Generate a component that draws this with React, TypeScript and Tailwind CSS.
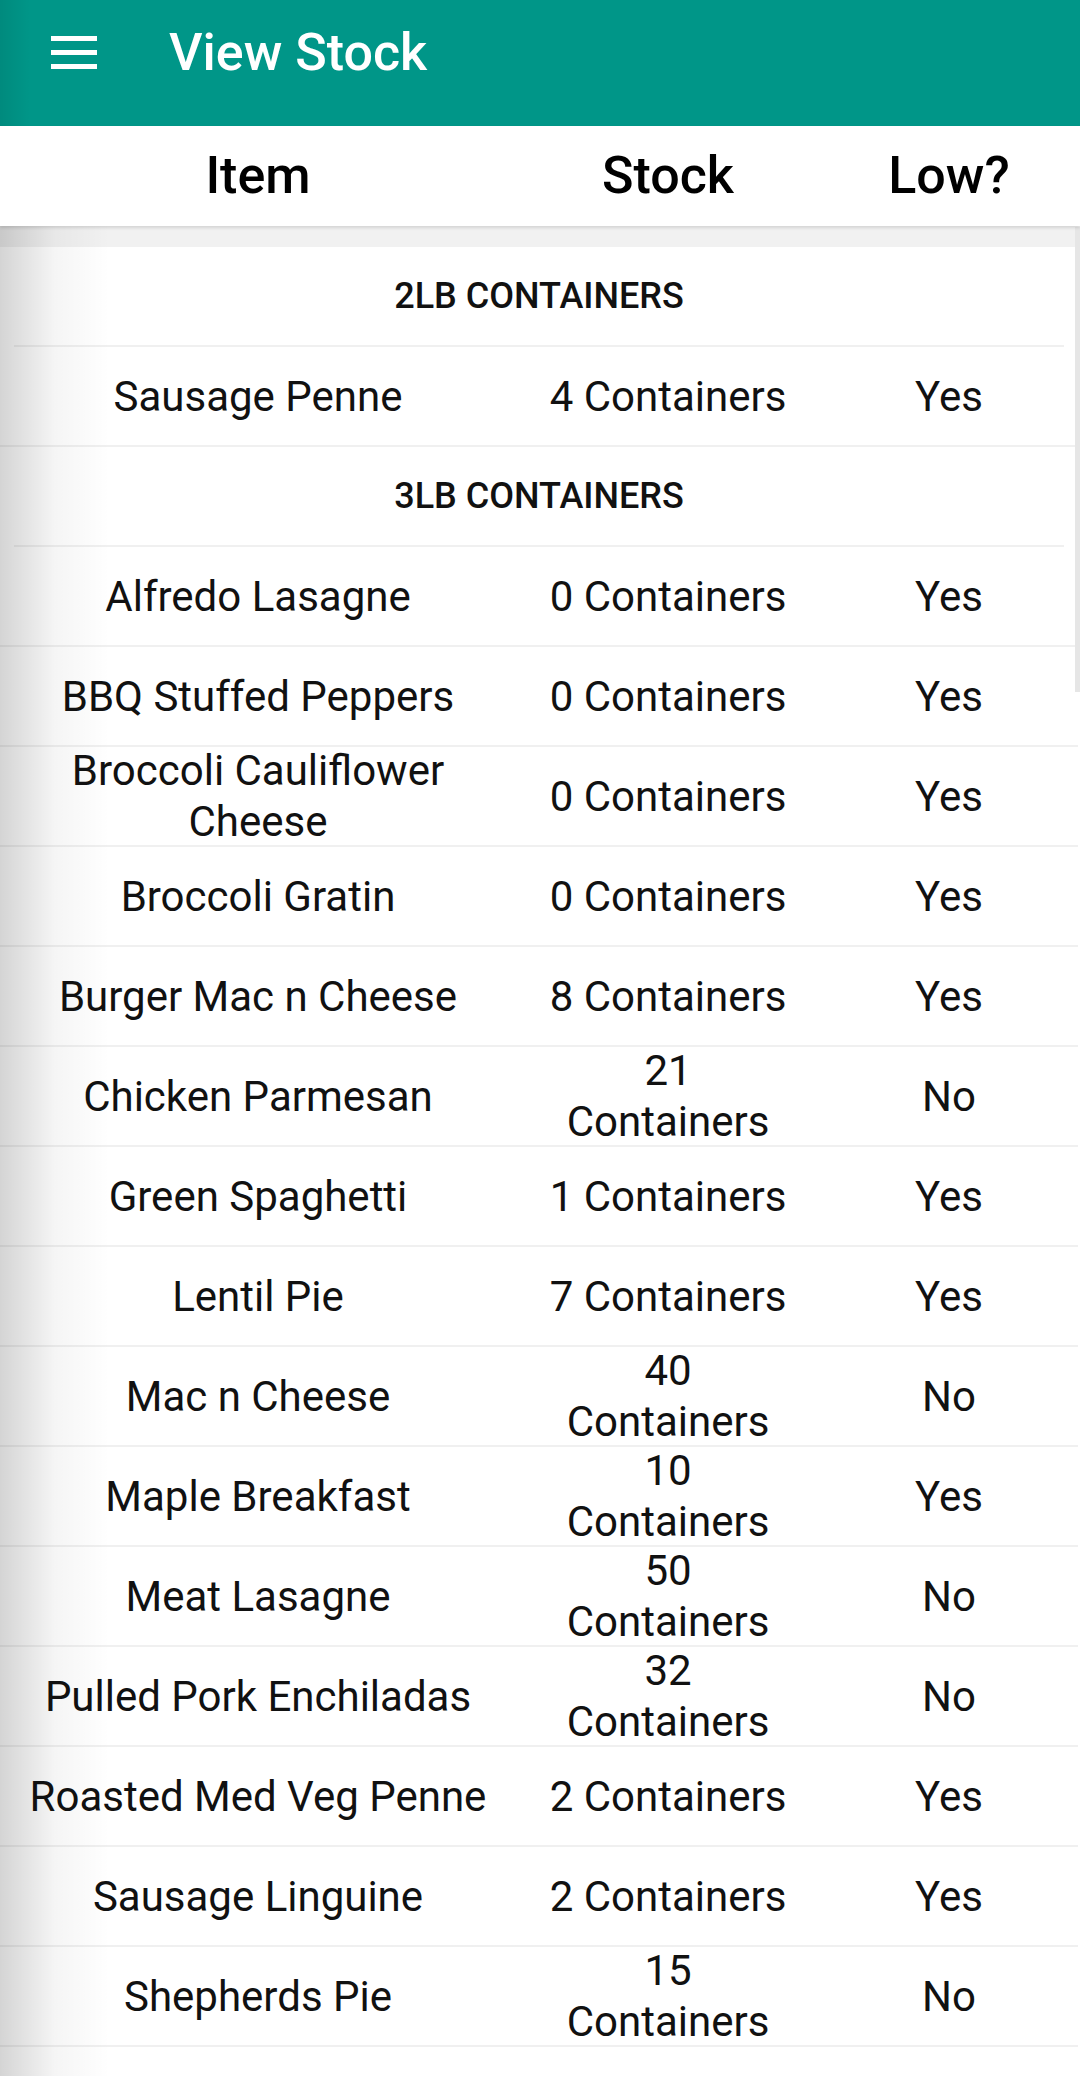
import React from "react"

type Row =
    | { kind: "section"; label: string }
    | { kind: "item"; name: string; stock: string; low: string }

const rows: Row[] = [
    { kind: "section", label: "2LB CONTAINERS" },
    { kind: "item", name: "Sausage Penne", stock: "4 Containers", low: "Yes" },
    { kind: "section", label: "3LB CONTAINERS" },
    { kind: "item", name: "Alfredo Lasagne", stock: "0 Containers", low: "Yes" },
    { kind: "item", name: "BBQ Stuffed Peppers", stock: "0 Containers", low: "Yes" },
    { kind: "item", name: "Broccoli Cauliflower Cheese", stock: "0 Containers", low: "Yes" },
    { kind: "item", name: "Broccoli Gratin", stock: "0 Containers", low: "Yes" },
    { kind: "item", name: "Burger Mac n Cheese", stock: "8 Containers", low: "Yes" },
    { kind: "item", name: "Chicken Parmesan", stock: "21 Containers", low: "No" },
    { kind: "item", name: "Green Spaghetti", stock: "1 Containers", low: "Yes" },
    { kind: "item", name: "Lentil Pie", stock: "7 Containers", low: "Yes" },
    { kind: "item", name: "Mac n Cheese", stock: "40 Containers", low: "No" },
    { kind: "item", name: "Maple Breakfast", stock: "10 Containers", low: "Yes" },
    { kind: "item", name: "Meat Lasagne", stock: "50 Containers", low: "No" },
    { kind: "item", name: "Pulled Pork Enchiladas", stock: "32 Containers", low: "No" },
    { kind: "item", name: "Roasted Med Veg Penne", stock: "2 Containers", low: "Yes" },
    { kind: "item", name: "Sausage Linguine", stock: "2 Containers", low: "Yes" },
    { kind: "item", name: "Shepherds Pie", stock: "15 Containers", low: "No" },
]

function MenuIcon() {
    return (
        <svg width="46" height="34" viewBox="0 0 46 34" fill="#ffffff">
            <rect x="0" y="0" width="46" height="5" />
            <rect x="0" y="14" width="46" height="5" />
            <rect x="0" y="28" width="46" height="5" />
        </svg>
    )
}

export default function App() {
    return (
        <div
            className="relative min-h-screen bg-white text-[#111111] overflow-hidden"
            style={{ fontFamily: "Roboto, 'Noto Sans', sans-serif" }}
        >
            {/* App bar */}
            <header className="h-[126px] bg-[#009688] flex items-center pb-[20px] pl-[51px]">
                <MenuIcon />
                <h1 className="ml-[72px] text-[52px] font-medium text-white leading-none">
                    View Stock
                </h1>
            </header>

            {/* Column headings */}
            <div className="relative z-10 h-[100px] bg-white flex items-center text-[52px] font-medium text-black shadow-[0_2px_3px_rgba(0,0,0,0.12)]">
                <div className="w-[516px] text-center">Item</div>
                <div className="w-[304px] text-center">Stock</div>
                <div className="w-[258px] text-center">Low?</div>
            </div>
            <div className="h-[21px] bg-[#f1f1f1]" />

            {/* Stock list */}
            <div className="w-[1078px] bg-white">
                {rows.map((row, i) =>
                    row.kind === "section" ? (
                        <div
                            key={i}
                            className="h-[100px] flex items-center justify-center border-b-2 border-[#f0f0f0] mx-[14px] text-[36px] font-medium"
                        >
                            {row.label}
                        </div>
                    ) : (
                        <div
                            key={i}
                            className="h-[100px] flex items-center border-b-2 border-[#f0f0f0] text-[42px] leading-[51px]"
                        >
                            <div className="w-[516px] px-[20px] text-center">{row.name}</div>
                            <div className="w-[304px] px-[26px] text-center">{row.stock}</div>
                            <div className="w-[258px] text-center">{row.low}</div>
                        </div>
                    )
                )}
            </div>

            {/* left edge shading */}
            <div className="pointer-events-none absolute left-0 top-[126px] bottom-0 w-[110px] bg-linear-to-r from-[rgba(0,0,0,0.17)] via-[rgba(0,0,0,0.04)] to-transparent" />
            <div className="pointer-events-none absolute left-0 top-0 h-[126px] w-[30px] bg-linear-to-r from-[rgba(0,0,0,0.08)] to-transparent" />

            {/* scrollbar */}
            <div className="absolute right-0 top-[227px] w-[5px] h-[465px] bg-[#e6e6e6]" />
        </div>
    )
}
